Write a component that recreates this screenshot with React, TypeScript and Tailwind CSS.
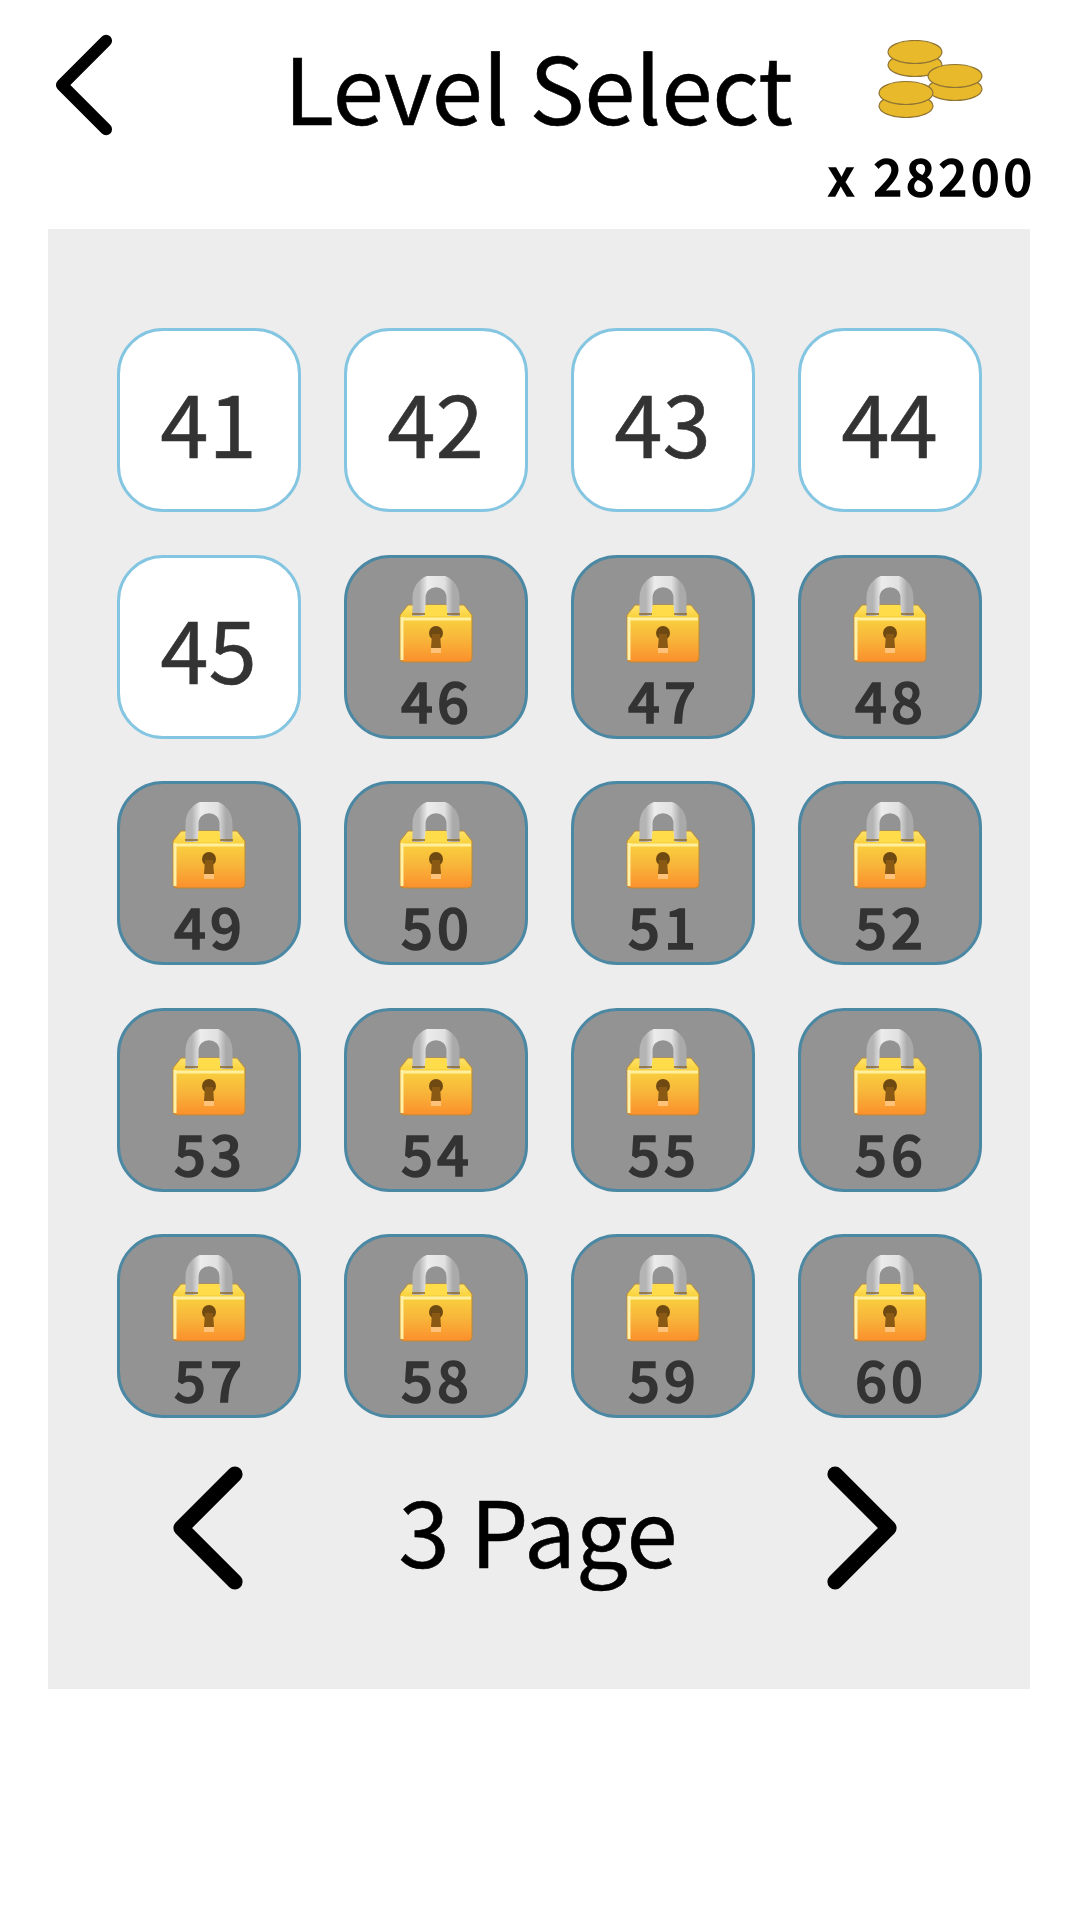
import React from 'react';

const levels = Array.from({ length: 20 }, (_, i) => 41 + i);
const lastOpen = 45;

// stroke chevron used by the back button and the pager
const Chevron = ({ dir, className, sw }: { dir: 'left' | 'right'; className: string; sw: number }) => (
  <svg viewBox="0 0 68 120" className={className} fill="none">
    <path
      d={dir === 'left' ? 'M60 8 L8 60 L60 112' : 'M8 8 L60 60 L8 112'}
      stroke="#000"
      strokeWidth={sw}
      strokeLinecap="round"
      strokeLinejoin="round"
    />
  </svg>
);

const CoinStack = ({ x, y }: { x: number; y: number }) => (
  <g stroke="#8f7434" strokeWidth="1.2" fill="#e9b92c">
    <ellipse cx={x} cy={y + 13} rx="27" ry="11.5" />
    <ellipse cx={x} cy={y} rx="27" ry="11.5" />
  </g>
);

const Coins = () => (
  <svg viewBox="0 0 106 78" className="h-[78px] w-[106px]">
    <CoinStack x={37} y={12} />
    <CoinStack x={77} y={36} />
    <CoinStack x={28} y={53} />
  </svg>
);

const Lock = () => (
  <svg viewBox="0 0 76 88" className="h-[88px] w-[76px]">
    <defs>
      <linearGradient id="lockBody" x1="0" y1="0" x2="0" y2="1">
        <stop offset="0" stopColor="#ffe36a" />
        <stop offset="0.2" stopColor="#f9d23f" />
        <stop offset="0.6" stopColor="#f8b53a" />
        <stop offset="1" stopColor="#fb8f2c" />
      </linearGradient>
      <linearGradient id="lockArc" x1="0" y1="0" x2="1" y2="0">
        <stop offset="0" stopColor="#b4b4b4" />
        <stop offset="0.25" stopColor="#ececec" />
        <stop offset="0.75" stopColor="#e0e0e0" />
        <stop offset="1" stopColor="#aaaaaa" />
      </linearGradient>
    </defs>
    <path d="M2 39 L10 29 H66 L74 39 V82 Q74 86 70 86 H6 Q2 86 2 82 Z" fill="url(#lockBody)" stroke="#b98a3a" strokeWidth="1" />
    <path d="M21 40 V22 C21 -1 55 -1 55 22 V40" fill="none" stroke="url(#lockArc)" strokeWidth="13" />
    <path d="M28 29 H48 L50 40 H26 Z" fill="#ffdc4a" />
    <path d="M14 38 H27 M49 38 H62" stroke="#8c6a2a" strokeWidth="1.5" />
    <path d="M4 43 H73" stroke="#ffef9e" strokeWidth="3" />
    <path d="M4 41 V84" stroke="#fff0a8" strokeWidth="3" />
    <circle cx="38" cy="57" r="7" fill="#6e4a12" />
    <path d="M34 58 H42 L43 72 H33 Z" fill="#8a5a14" />
    <path d="M33 72 H43 V77 H33 Z" fill="#ffc27a" />
  </svg>
);

const Tile = ({ n }: { n: number }) =>
  n <= lastOpen ? (
    <div className="flex h-[184px] w-[184px] items-center justify-center rounded-[46px] border-[3px] border-[#84c6e2] bg-white text-[87px] leading-none text-[#333333] [-webkit-text-stroke:0.6px_#333333]">
      {n}
    </div>
  ) : (
    <div className="flex h-[184px] w-[184px] flex-col items-center rounded-[46px] border-[3px] border-[#4b88a3] bg-[#939393] pt-[18px]">
      <Lock />
      <span className="mt-[2px] pl-[3px] text-[56px] leading-[66px] font-medium tracking-[4px] text-[#333333] [-webkit-text-stroke:1.5px_#333333]">
        {n}
      </span>
    </div>
  );

export default function App() {
  return (
    <div
      className="flex h-[1920px] w-[1080px] flex-col bg-white text-black"
      style={{ fontFamily: '"Noto Sans CJK SC", "Noto Sans", sans-serif' }}
    >
      <header className="flex h-[229px] items-start">
        <Chevron dir="left" sw={14} className="mt-[34px] ml-[54px] h-[102px] w-[60px]" />
        <h1 className="mt-[30px] ml-[170px] text-[92px] leading-[110px] font-normal [-webkit-text-stroke:0.6px_#000]">
          Level Select
        </h1>
        <div className="ml-auto mr-[44px] mt-[40px] flex flex-col items-end">
          <div className="mr-[52px]">
            <Coins />
          </div>
          <span className="mt-[26px] text-[50px] leading-[60px] font-medium tracking-[4px] [-webkit-text-stroke:1.5px_#000]">
            x 28200
          </span>
        </div>
      </header>

      <main className="ml-[48px] mr-[50px] flex h-[1460px] flex-col items-start bg-[#ededed] pt-[99px]">
        <div className="ml-[68.5px] grid grid-cols-4 gap-x-[43px] gap-y-[42.5px]">
          {levels.map((n) => (
            <Tile key={n} n={n} />
          ))}
        </div>
        <div className="mt-[48px] ml-[124px] flex w-[726px] items-center justify-between">
          <Chevron dir="left" sw={15} className="h-[124px] w-[72px]" />
          <span className="pl-[6px] text-[92px] leading-[124px] [-webkit-text-stroke:0.6px_#000]">3 Page</span>
          <Chevron dir="right" sw={15} className="h-[124px] w-[72px]" />
        </div>
      </main>
    </div>
  );
}
